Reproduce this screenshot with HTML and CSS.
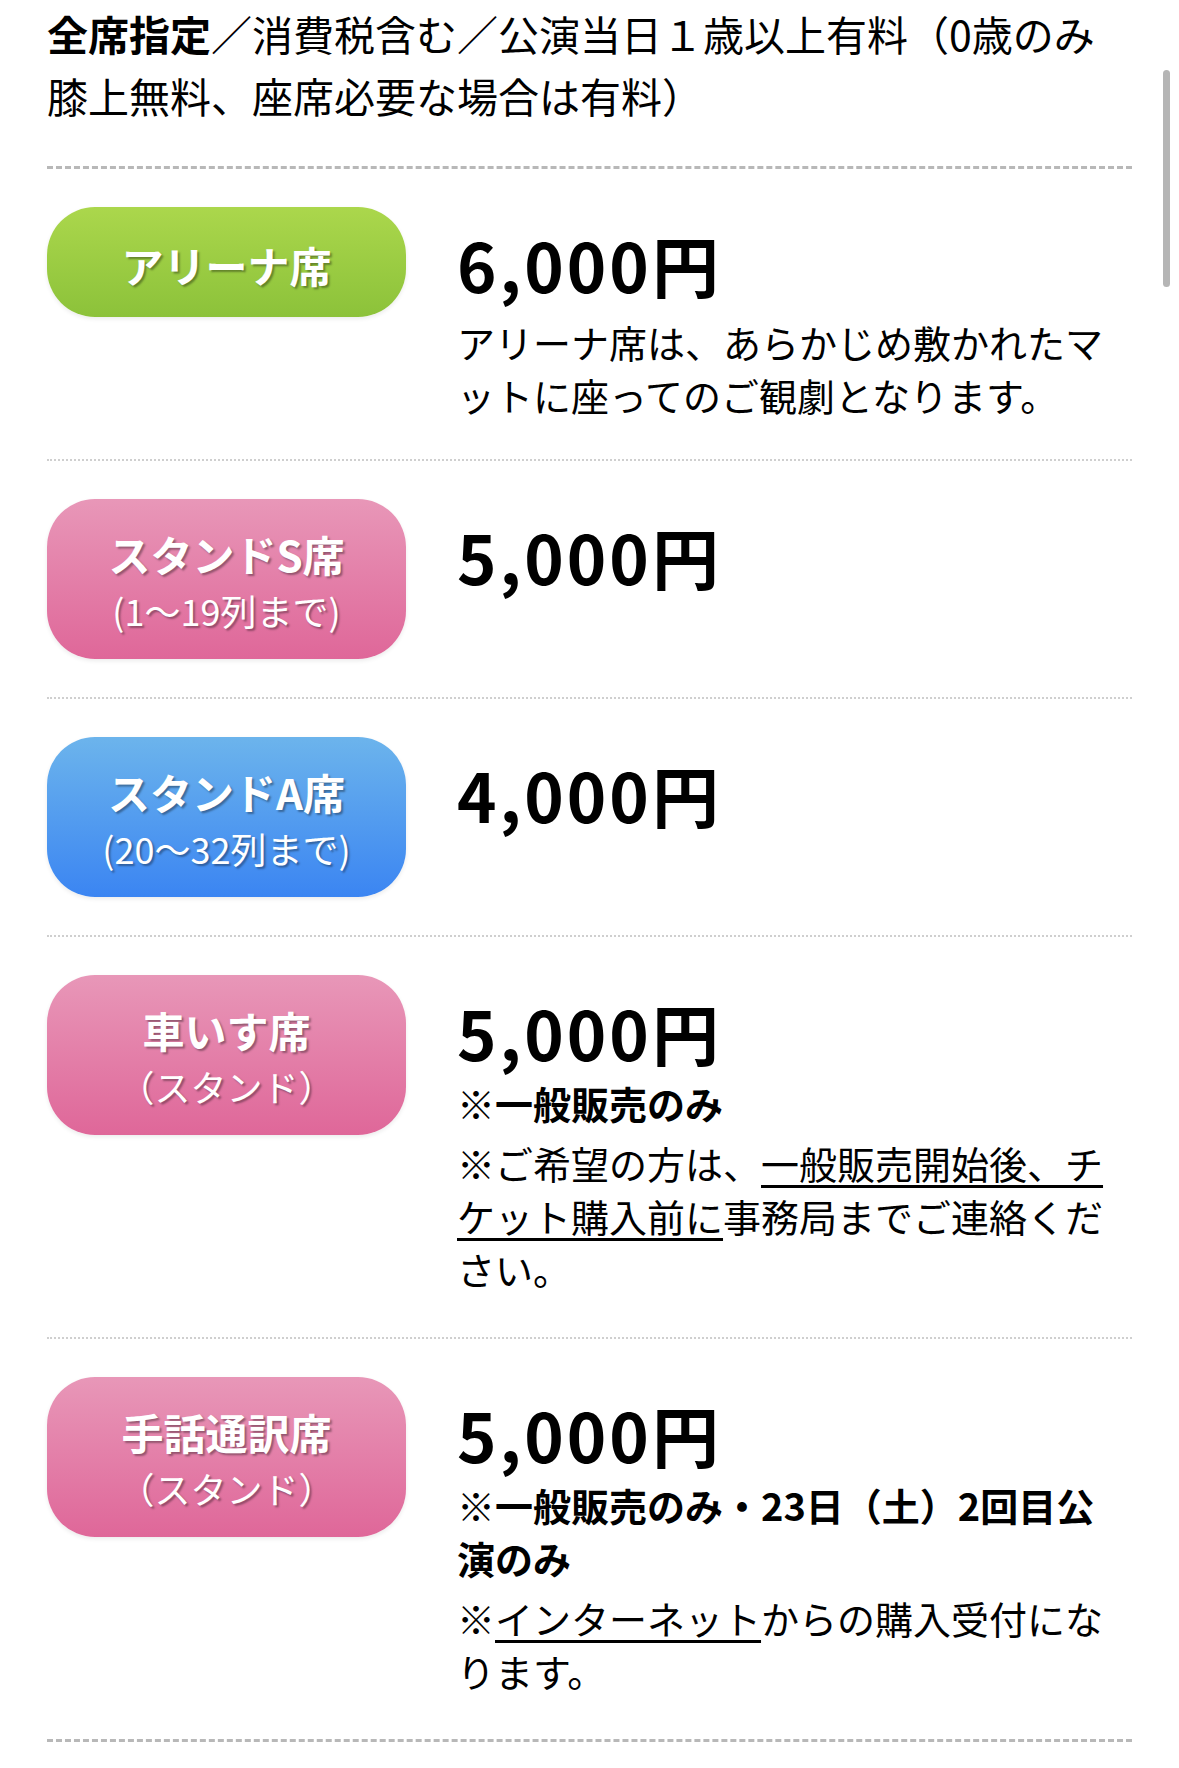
FILE: index.html
```html
<!DOCTYPE html>
<html lang="ja">
<head>
    <meta charset="UTF-8">
    <meta name="viewport" content="width=device-width, initial-scale=1.0">
    <title>料金</title>
    <link rel="stylesheet" href="styles.css">
</head>
<body>
    <div class="container">
        <p class="lead"><strong>全席指定</strong>／消費税含む／公演当日１歳以上有料（0歳のみ膝上無料、座席必要な場合は有料）</p>

        <div class="price-list">
            <div class="seat">
                <div class="label green">
                    <span class="label-main">アリーナ席</span>
                </div>
                <div class="info">
                    <div class="price">6,000円</div>
                    <p class="desc">アリーナ席は、あらかじめ敷かれたマットに座ってのご観劇となります。</p>
                </div>
            </div>

            <div class="seat">
                <div class="label pink">
                    <span class="label-main">スタンドS席</span>
                    <span class="label-sub">(1〜19列まで)</span>
                </div>
                <div class="info">
                    <div class="price">5,000円</div>
                </div>
            </div>

            <div class="seat">
                <div class="label blue">
                    <span class="label-main">スタンドA席</span>
                    <span class="label-sub">(20〜32列まで)</span>
                </div>
                <div class="info">
                    <div class="price">4,000円</div>
                </div>
            </div>

            <div class="seat">
                <div class="label pink">
                    <span class="label-main">車いす席</span>
                    <span class="label-sub">（スタンド）</span>
                </div>
                <div class="info">
                    <div class="price">5,000円</div>
                    <p class="note-bold">※一般販売のみ</p>
                    <p class="note">※ご希望の方は、<u>一般販売開始後、チケット購入前に</u>事務局までご連絡ください。</p>
                </div>
            </div>

            <div class="seat">
                <div class="label pink">
                    <span class="label-main">手話通訳席</span>
                    <span class="label-sub">（スタンド）</span>
                </div>
                <div class="info">
                    <div class="price">5,000円</div>
                    <p class="note-bold">※一般販売のみ・23日（土）2回目公演のみ</p>
                    <p class="note">※<a href="#">インターネット</a>からの購入受付になります。</p>
                </div>
            </div>
        </div>
    </div>

    <div class="scroll-indicator"></div>
</body>
</html>
```

FILE: styles.css
```css
body {
    margin: 0;
    padding: 0;
    background: #fff;
    color: #000;
    font-family: "Noto Sans CJK JP", "Noto Sans", sans-serif;
}

.container {
    padding: 2px 47px 40px;
}

.lead {
    margin: 0;
    font-size: 41px;
    line-height: 62px;
    padding-bottom: 40px;
    border-bottom: 3px dashed #b8b8b8;
}

.lead strong {
    font-weight: 700;
}

.price-list {
    border-bottom: 3px dashed #b8b8b8;
}

.seat {
    display: flex;
    gap: 51px;
    padding: 38px 0;
    border-bottom: 2px dotted #cfcfcf;
}

.seat:last-child {
    border-bottom: none;
}

.label {
    flex-shrink: 0;
    width: 359px;
    min-height: 110px;
    box-sizing: border-box;
    padding: 27px 10px 21px;
    border-radius: 48px;
    display: flex;
    flex-direction: column;
    justify-content: center;
    align-items: center;
    color: #fff;
    text-shadow: 2px 2px 2px rgba(0, 0, 0, 0.35);
    box-shadow: 0 2px 4px rgba(0, 0, 0, 0.08);
    align-self: flex-start;
}

.label-main {
    font-size: 42px;
    font-weight: 700;
    line-height: 56px;
}

.label-sub {
    font-size: 36px;
    line-height: 56px;
}

.green {
    background: linear-gradient(to bottom, #abd74c, #8cc23a);
}

.pink {
    background: linear-gradient(to bottom, #e897b8, #df6799);
}

.blue {
    background: linear-gradient(to bottom, #6cb4ec, #3b85f2);
}

.info {
    flex: 1;
    min-width: 0;
}

.price {
    margin-top: 17px;
    font-size: 67px;
    font-weight: 700;
    line-height: 80px;
    letter-spacing: 3px;
}

.desc,
.note,
.note-bold {
    margin: 0;
    font-size: 38px;
    line-height: 53px;
}

.desc {
    margin-top: 11px;
}

.note-bold {
    margin-top: 4px;
    font-weight: 700;
}

.note {
    margin-top: 7px;
    margin-bottom: 4px;
}

.note u,
.note a {
    color: inherit;
    text-decoration: underline;
    text-decoration-thickness: 3px;
    text-underline-offset: 6px;
}

.scroll-indicator {
    position: fixed;
    top: 70px;
    right: 9px;
    width: 7px;
    height: 217px;
    border-radius: 4px;
    background: #b5b5b5;
}
```
